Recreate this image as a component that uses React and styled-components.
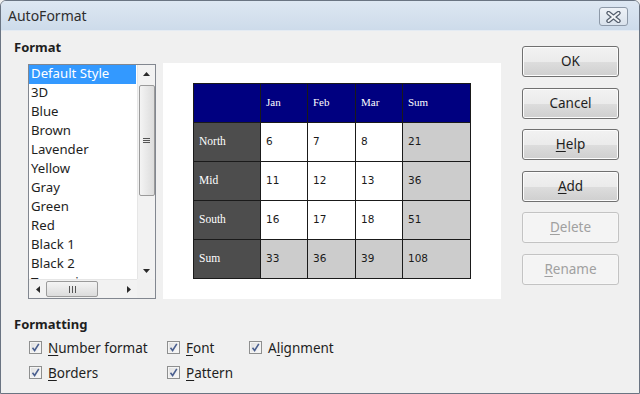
import React from "react";
import styled, { createGlobalStyle } from "styled-components";

const GlobalStyle = createGlobalStyle`
  html, body {
    margin: 0;
    padding: 0;
    background: #f0f0f0;
  }
  body {
    font-family: "Noto Sans", "Open Sans", sans-serif;
    font-size: 13px;
    color: #1e1e1e;
  }
`;

const Window = styled.div`
  width: 640px;
  height: 394px;
  box-sizing: border-box;
  border: 1px solid #6a7482;
  border-radius: 6px 6px 0 0;
  background: #f0f0f0;
  display: flex;
  flex-direction: column;
  overflow: hidden;
`;

const TitleBar = styled.div`
  height: 29px;
  flex: none;
  display: flex;
  align-items: center;
  justify-content: space-between;
  padding: 0 11px 0 7px;
  background: linear-gradient(#dde7f2, #cddbea);
  border-bottom: 1px solid #e4ebf3;
`;

const Title = styled.span`
  font-size: 14px;
  color: #2e2e2e;
  margin-top: -1px;
`;

const CloseButton = styled.div`
  width: 29px;
  height: 19px;
  box-sizing: border-box;
  border: 1px solid #8d99a8;
  border-radius: 3px;
  background: linear-gradient(#eef2f7, #d9e2ec);
  display: flex;
  align-items: center;
  justify-content: center;
  margin-top: 2px;
`;

const Body = styled.div`
  flex: 1;
  display: flex;
  padding: 0 20px 0 13px;
`;

const Main = styled.div`
  flex: 1;
  display: flex;
  flex-direction: column;
`;

const SectionLabel = styled.div`
  font-weight: bold;
  line-height: 16px;
  margin-top: ${(p) => p.$top}px;
`;

const FormatRow = styled.div`
  display: flex;
  gap: 7px;
  margin: 8px 0 0 14px;
  height: 236px;
`;

const ListBox = styled.div`
  width: 128px;
  height: 235px;
  margin-top: 1px;
  box-sizing: border-box;
  border: 1px solid #828790;
  background: #fff;
  display: grid;
  grid-template-columns: 1fr 18px;
  grid-template-rows: 1fr 19px;
`;

const Items = styled.div`
  overflow: hidden;
  padding-right: 1px;
`;

const Item = styled.div`
  height: 19px;
  line-height: 17px;
  padding-left: 2px;
  white-space: nowrap;
  font-size: 13.2px;
  color: ${(p) => (p.$selected ? "#fff" : "#1e1e1e")};
  background: ${(p) => (p.$selected ? "#3399ff" : "transparent")};
`;

const VScroll = styled.div`
  background: #f2f2f2;
  border-left: 1px solid #e6e6e6;
  display: flex;
  flex-direction: column;
  align-items: center;
`;

const HScroll = styled.div`
  background: #f2f2f2;
  border-top: 1px solid #e6e6e6;
  display: flex;
  align-items: center;
`;

const Corner = styled.div`
  background: #f0f0f0;
`;

const ArrowBox = styled.div`
  width: ${(p) => (p.$h ? 17 : 18)}px;
  height: ${(p) => (p.$h ? 18 : 17)}px;
  display: flex;
  align-items: center;
  justify-content: center;
  flex: none;
`;

const Thumb = styled.div`
  box-sizing: border-box;
  border: 1px solid #9b9b9b;
  border-radius: 2px;
  background: ${(p) =>
    p.$h
      ? "linear-gradient(#f4f4f4, #dcdcdc)"
      : "linear-gradient(90deg, #f4f4f4, #dcdcdc)"};
  display: flex;
  align-items: center;
  justify-content: center;
  ${(p) =>
    p.$h
      ? "width: 52px; height: 16px; margin-left: 0;"
      : "width: 16px; height: 111px; margin-top: 3px;"}
`;

const Spacer = styled.div`
  flex: 1;
`;

const Preview = styled.div`
  width: 338px;
  height: 236px;
  background: #fff;
  display: flex;
  align-items: center;
  justify-content: center;
`;

const Table = styled.table`
  border-collapse: collapse;
  border: 1px solid #1a1a1a;
`;

const Cell = styled.td`
  border: 1px solid #1a1a1a;
  height: 39px;
  padding: 0 0 3px 5px;
  box-sizing: border-box;
  vertical-align: middle;
  ${(p) =>
    p.$kind === "head"
      ? "background: #000080; color: #fff; font-family: 'Liberation Serif', serif; font-size: 11px;"
      : p.$kind === "side"
      ? "background: #4d4d4d; color: #fff; font-family: 'Liberation Serif', serif; font-size: 11.5px;"
      : p.$kind === "sum"
      ? "background: #cccccc; color: #1a1a1a; font-family: 'DejaVu Sans', sans-serif; font-size: 10.5px;"
      : "background: #fff; color: #1a1a1a; font-family: 'DejaVu Sans', sans-serif; font-size: 10.5px;"}
`;

const Checks = styled.div`
  display: grid;
  grid-template-columns: 138px 82px auto;
  grid-auto-rows: 25px;
  margin: 3px 0 0 15px;
`;

const CheckItem = styled.label`
  display: flex;
  align-items: center;
  gap: 6px;
  font-size: 13.5px;
  white-space: nowrap;
`;

const Box = styled.span`
  width: 13px;
  height: 13px;
  box-sizing: border-box;
  border: 1px solid #8e8f8f;
  background: linear-gradient(135deg, #dedede, #fbfbfb);
  box-shadow: inset 0 0 0 1px #f4f4f4;
  display: flex;
  align-items: center;
  justify-content: center;
  flex: none;
`;

const Buttons = styled.div`
  width: 97px;
  display: flex;
  flex-direction: column;
  gap: 10.6px;
  margin-top: 15px;
`;

const Button = styled.div`
  height: 31px;
  box-sizing: border-box;
  border: 1px solid ${(p) => (p.$disabled ? "#c3c3c3" : "#707070")};
  border-radius: 3px;
  background: ${(p) =>
    p.$disabled
      ? "#f4f4f4"
      : "linear-gradient(#f2f2f2 0%, #ebebeb 50%, #dddddd 51%, #cfcfcf 100%)"};
  box-shadow: inset 0 0 0 1px ${(p) => (p.$disabled ? "#f7f7f7" : "#fcfcfc")};
  color: ${(p) => (p.$disabled ? "#a0a0a0" : "#1e1e1e")};
  font-size: 13.5px;
  padding-bottom: 1px;
  display: flex;
  align-items: center;
  justify-content: center;
`;

const Key = styled.span`
  text-decoration: underline;
  text-underline-offset: 2px;
`;

const Tri = ({ dir }) => {
  const pts = {
    up: "0,4 3.5,0 7,4",
    down: "0,0 3.5,4 7,0",
    left: "4,0 0,3.5 4,7",
    right: "0,0 4,3.5 0,7",
  }[dir];
  const vertical = dir === "up" || dir === "down";
  return (
    <svg width={vertical ? 7 : 4} height={vertical ? 4 : 7}>
      <polygon points={pts} fill="#2a2a2a" />
    </svg>
  );
};

const Grip = ({ h }) =>
  h ? (
    <svg width="9" height="7">
      <path d="M1.5 0v7M4.5 0v7M7.5 0v7" stroke="#555" strokeWidth="1" />
    </svg>
  ) : (
    <svg width="7" height="7">
      <path d="M0 1.5h7M0 3.5h7M0 5.5h7" stroke="#555" strokeWidth="1" />
    </svg>
  );

const Tick = () => (
  <svg width="9" height="9" viewBox="0 0 9 9">
    <path
      d="M1.5 4.8 L3.6 7.5 L7.8 0.8"
      fill="none"
      stroke="#4a5f8f"
      strokeWidth="1.6"
    />
  </svg>
);

const CloseIcon = () => (
  <svg width="15" height="12" viewBox="0 0 15 12">
    <path
      d="M2.5 2 L12.5 10 M12.5 2 L2.5 10"
      stroke="#56606f"
      strokeWidth="4.4"
      strokeLinecap="round"
    />
    <path
      d="M2.5 2 L12.5 10 M12.5 2 L2.5 10"
      stroke="#f3f5f8"
      strokeWidth="2"
      strokeLinecap="round"
    />
  </svg>
);

const styles = [
  "Default Style",
  "3D",
  "Blue",
  "Brown",
  "Lavender",
  "Yellow",
  "Gray",
  "Green",
  "Red",
  "Black 1",
  "Black 2",
  "Turquoise",
];

const rows = [
  ["North", 6, 7, 8, 21],
  ["Mid", 11, 12, 13, 36],
  ["South", 16, 17, 18, 51],
];

const widths = [67, 47, 48, 47, 68];

const Label = ({ text, k }) => {
  const i = text.indexOf(k);
  return (
    <span>
      {text.slice(0, i)}
      <Key>{k}</Key>
      {text.slice(i + 1)}
    </span>
  );
};

const Check = ({ text, k }) => (
  <CheckItem>
    <Box>
      <Tick />
    </Box>
    <Label text={text} k={k} />
  </CheckItem>
);

export default function App() {
  return (
    <>
      <GlobalStyle />
      <Window>
        <TitleBar>
          <Title>AutoFormat</Title>
          <CloseButton>
            <CloseIcon />
          </CloseButton>
        </TitleBar>
        <Body>
          <Main>
            <SectionLabel $top={8}>Format</SectionLabel>
            <FormatRow>
              <ListBox>
                <Items>
                  {styles.map((s, i) => (
                    <Item key={s} $selected={i === 0}>
                      {s}
                    </Item>
                  ))}
                </Items>
                <VScroll>
                  <ArrowBox>
                    <Tri dir="up" />
                  </ArrowBox>
                  <Thumb>
                    <Grip />
                  </Thumb>
                  <Spacer />
                  <ArrowBox>
                    <Tri dir="down" />
                  </ArrowBox>
                </VScroll>
                <HScroll>
                  <ArrowBox $h>
                    <Tri dir="left" />
                  </ArrowBox>
                  <Thumb $h>
                    <Grip h />
                  </Thumb>
                  <Spacer />
                  <ArrowBox $h>
                    <Tri dir="right" />
                  </ArrowBox>
                </HScroll>
                <Corner />
              </ListBox>
              <Preview>
                <Table>
                  <colgroup>
                    {widths.map((w, i) => (
                      <col key={i} style={{ width: w }} />
                    ))}
                  </colgroup>
                  <tbody>
                    <tr>
                      <Cell $kind="head" />
                      {["Jan", "Feb", "Mar", "Sum"].map((m) => (
                        <Cell key={m} $kind="head">
                          {m}
                        </Cell>
                      ))}
                    </tr>
                    {rows.map((r) => (
                      <tr key={r[0]}>
                        <Cell $kind="side">{r[0]}</Cell>
                        <Cell>{r[1]}</Cell>
                        <Cell>{r[2]}</Cell>
                        <Cell>{r[3]}</Cell>
                        <Cell $kind="sum">{r[4]}</Cell>
                      </tr>
                    ))}
                    <tr>
                      <Cell $kind="side">Sum</Cell>
                      {[33, 36, 39, 108].map((v) => (
                        <Cell key={v} $kind="sum">
                          {v}
                        </Cell>
                      ))}
                    </tr>
                  </tbody>
                </Table>
              </Preview>
            </FormatRow>
            <SectionLabel $top={17}>Formatting</SectionLabel>
            <Checks>
              <Check text="Number format" k="N" />
              <Check text="Font" k="F" />
              <Check text="Alignment" k="l" />
              <Check text="Borders" k="B" />
              <Check text="Pattern" k="P" />
            </Checks>
          </Main>
          <Buttons>
            <Button>OK</Button>
            <Button>Cancel</Button>
            <Button>
              <Label text="Help" k="H" />
            </Button>
            <Button>
              <Label text="Add" k="A" />
            </Button>
            <Button $disabled>
              <Label text="Delete" k="D" />
            </Button>
            <Button $disabled>
              <Label text="Rename" k="R" />
            </Button>
          </Buttons>
        </Body>
      </Window>
    </>
  );
}
